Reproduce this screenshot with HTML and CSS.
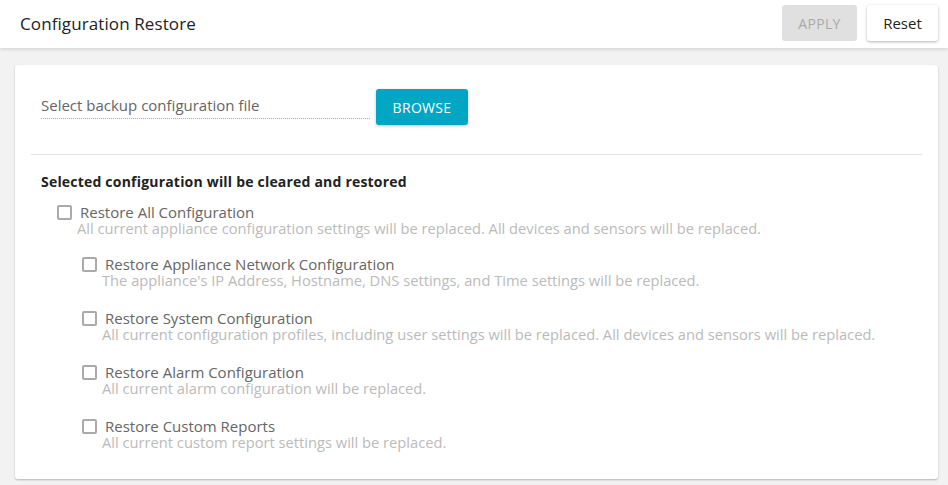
FILE: index.html
```html
<!DOCTYPE html>
<html lang="en">
<head>
  <meta charset="UTF-8">
  <title>Configuration Restore</title>
  <link rel="stylesheet" href="styles.css">
</head>
<body>

<div class="topbar">
  <h1 class="title">Configuration Restore</h1>
  <div class="top-actions">
    <button class="btn btn-apply" disabled>APPLY</button>
    <button class="btn btn-reset">Reset</button>
  </div>
</div>

<div class="card">
  <div class="file-row">
    <div class="file-field">Select backup configuration file</div>
    <button class="btn btn-browse">BROWSE</button>
  </div>

  <div class="divider"></div>

  <div class="section-title">Selected configuration will be cleared and restored</div>

  <div class="option">
    <div class="option-head">
      <span class="checkbox"></span>
      <span class="option-label">Restore All Configuration</span>
    </div>
    <div class="option-desc">All current appliance configuration settings will be replaced. All devices and sensors will be replaced.</div>
  </div>

  <div class="sub-options">
    <div class="option">
      <div class="option-head">
        <span class="checkbox"></span>
        <span class="option-label">Restore Appliance Network Configuration</span>
      </div>
      <div class="option-desc">The appliance's IP Address, Hostname, DNS settings, and Time settings will be replaced.</div>
    </div>

    <div class="option">
      <div class="option-head">
        <span class="checkbox"></span>
        <span class="option-label">Restore System Configuration</span>
      </div>
      <div class="option-desc">All current configuration profiles, including user settings will be replaced. All devices and sensors will be replaced.</div>
    </div>

    <div class="option">
      <div class="option-head">
        <span class="checkbox"></span>
        <span class="option-label">Restore Alarm Configuration</span>
      </div>
      <div class="option-desc">All current alarm configuration will be replaced.</div>
    </div>

    <div class="option">
      <div class="option-head">
        <span class="checkbox"></span>
        <span class="option-label">Restore Custom Reports</span>
      </div>
      <div class="option-desc">All current custom report settings will be replaced.</div>
    </div>
  </div>
</div>

</body>
</html>
```

FILE: styles.css
```css
* {
  box-sizing: border-box;
}

html, body {
  margin: 0;
  padding: 0;
  width: 100%;
  height: 100%;
  overflow: hidden;
  background: #f2f2f2;
  font-family: "Open Sans", Arial, sans-serif;
}

.topbar {
  height: 48px;
  background: white;
  box-shadow: 0 1px 4px rgba(0,0,0,0.15);
  display: flex;
  align-items: center;
  justify-content: space-between;
  padding: 0 10px 0 20px;
  position: relative;
}

.title {
  margin: 0 0 1px;
  font-size: 17px;
  font-weight: 500;
  color: #222;
  letter-spacing: 0.1px;
}

.top-actions {
  display: flex;
  gap: 10px;
  align-self: flex-start;
  padding-top: 5px;
}

.btn {
  font-family: inherit;
  border: none;
  border-radius: 3px;
  height: 36px;
  cursor: pointer;
}

.btn-apply {
  width: 75px;
  background: #e0e0e0;
  color: #aaa;
  font-size: 14px;
  letter-spacing: 0.3px;
}

.btn-reset {
  width: 71px;
  background: white;
  color: #222;
  font-size: 15px;
  box-shadow: 0 1px 3px rgba(0,0,0,0.3);
}

.card {
  margin: 17px 10px 0 15px;
  background: white;
  border-radius: 3px;
  box-shadow: 0 1px 2px rgba(0,0,0,0.25);
  padding: 24px 16px 26px;
  height: 414px;
}

.file-row {
  display: flex;
  align-items: flex-start;
  gap: 6px;
  padding-left: 10px;
}

.file-field {
  width: 329px;
  font-size: 15px;
  line-height: 19px;
  color: #666;
  padding-bottom: 3px;
  border-bottom: 1px dotted #aaa;
  margin-top: 7px;
}

.btn-browse {
  width: 92px;
  background: #00a6c2;
  color: white;
  font-size: 14px;
  letter-spacing: 0.3px;
  box-shadow: 0 1px 3px rgba(0,0,0,0.25);
}

.divider {
  height: 1px;
  background: #e3e3e3;
  margin: 29px 0 17px;
}

.section-title {
  padding-left: 10px;
  font-size: 14px;
  font-weight: 700;
  color: #222;
  letter-spacing: 0.2px;
  margin-bottom: 13px;
}

.option {
  padding-left: 26px;
  margin-bottom: 22px;
}

.option-head {
  display: flex;
  align-items: center;
  gap: 8px;
  height: 16px;
}

.checkbox {
  width: 15px;
  height: 15px;
  border: 2px solid #aaa;
  border-radius: 2px;
  flex: none;
}

.option-label {
  display: block;
  font-size: 15px;
  line-height: 16px;
  color: #666;
}

.option-desc {
  font-size: 14.7px;
  color: #bbb;
  padding-left: 20px;
  line-height: 16px;
}

.sub-options {
  padding-left: 25px;
  margin-top: -2px;
}
```
